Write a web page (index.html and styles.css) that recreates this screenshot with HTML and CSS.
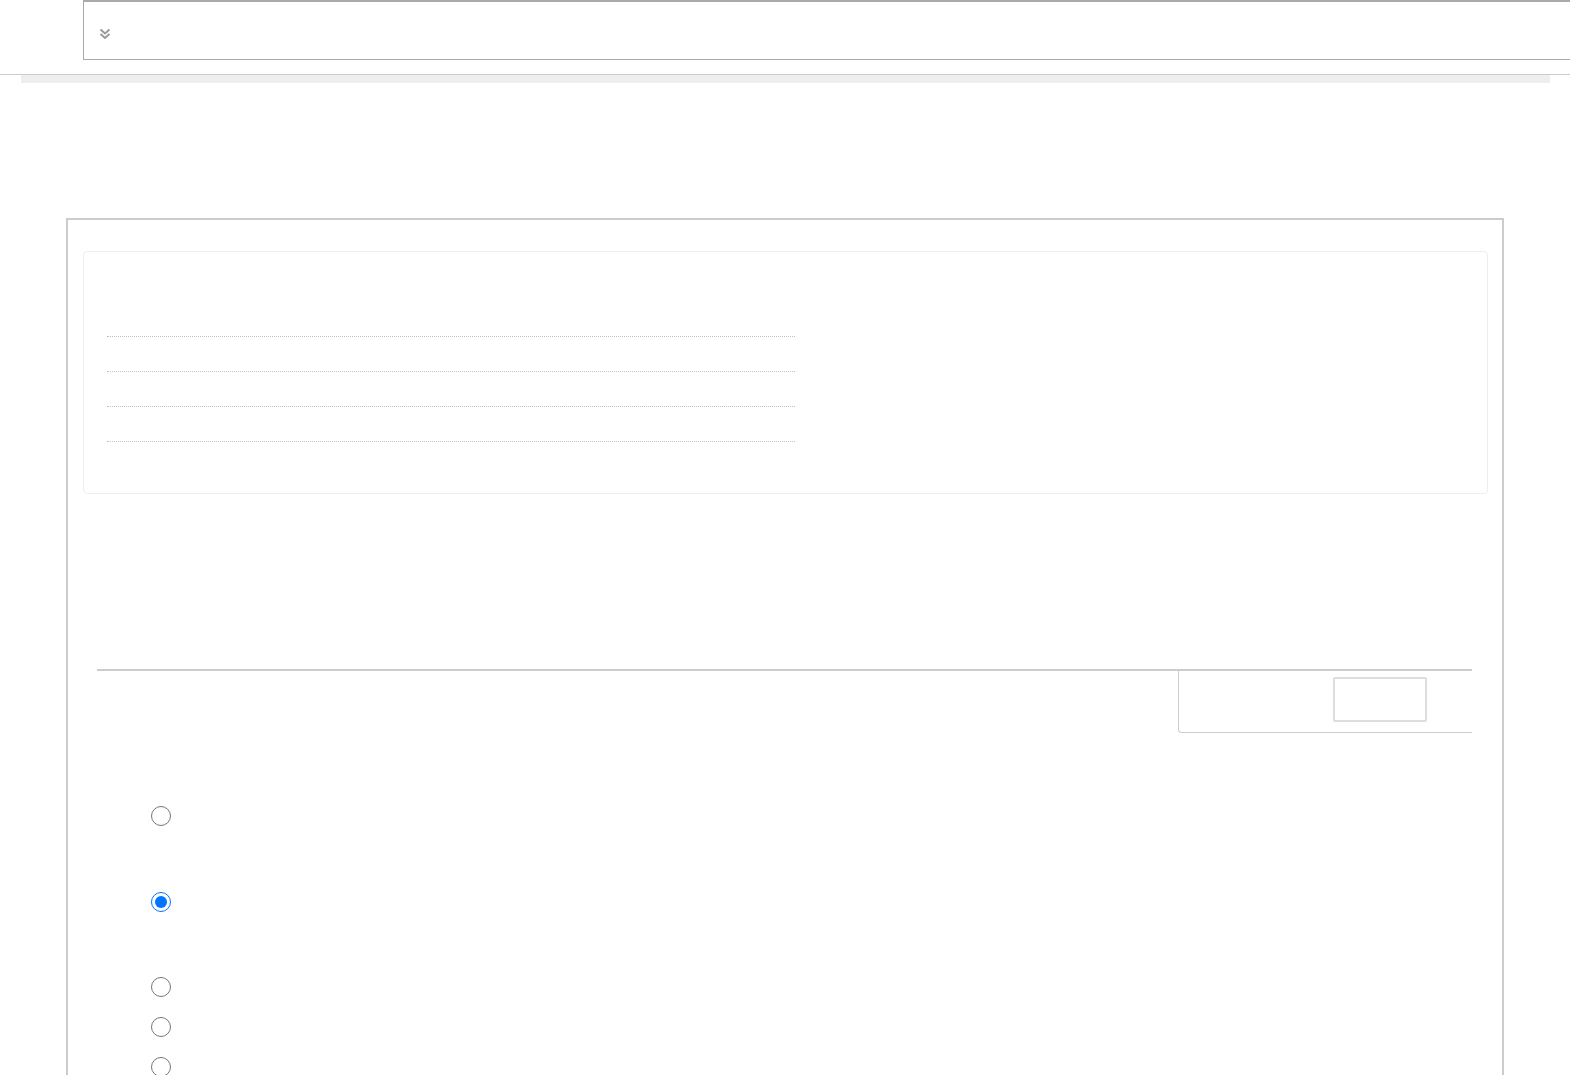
FILE: index.html
```html
<!DOCTYPE html>
<html>
<head>
<meta charset="utf-8">
<link rel="stylesheet" href="styles.css">
</head>
<body>
<div class="header">
  <div class="toolbar">
    <svg class="chev" width="12" height="12" viewBox="0 0 12 12"><path d="M1.5 1.5 L6 5.5 L10.5 1.5 M1.5 6 L6 10 L10.5 6" fill="none" stroke="#9a9a9a" stroke-width="2"/></svg>
  </div>
</div>
<div class="greybar"></div>
<div class="main">
  <div class="card">
    <div class="rows">
      <div class="row thick"><span class="c1"></span><span class="c2"></span></div>
      <div class="row"><span class="c1"></span><span class="c2"></span></div>
      <div class="row thick"><span class="c1"></span><span class="c2"></span></div>
      <div class="row"><span class="c1"></span><span class="c2"></span></div>
    </div>
  </div>
  <div class="section">
    <div class="tabbar">
      <div class="tabspace"></div>
      <div class="tabbox"><div class="field"></div></div>
    </div>
    <div class="radios">
      <label class="r r-big"><input type="radio" name="opt"></label>
      <label class="r r-big"><input type="radio" name="opt" checked></label>
      <label class="r r-mid"><input type="radio" name="opt"></label>
      <label class="r r-small"><input type="radio" name="opt"></label>
      <label class="r r-small"><input type="radio" name="opt"></label>
    </div>
  </div>
</div>
</body>
</html>
```
FILE: styles.css
```css
html, body {
  margin: 0;
  padding: 0;
  background: #fff;
  font-family: "Liberation Sans", Arial, sans-serif;
  overflow: hidden;
  height: 1075px;
}
.header {
  height: 74px;
  border-bottom: 1px solid #cccccc;
  box-sizing: content-box;
}
.toolbar {
  margin-left: 83px;
  width: 1500px;
  height: 57px;
  border: 1px solid #aaaaaa;
  border-top: 2px solid #aaaaaa;
  display: flex;
  align-items: center;
  padding-left: 15px;
  box-sizing: content-box;
}
.chev {
  display: block;
  margin-top: 6px;
}
.greybar {
  margin-left: 21px;
  width: 1529px;
  height: 8px;
  background: #eeeeee;
}
.main {
  margin-top: 135px;
  margin-left: 66px;
  width: 1434px;
  height: 900px;
  border: 2px solid #cccccc;
  border-bottom: none;
  padding-top: 31px;
}
.card {
  margin-left: 15px;
  width: 1403px;
  height: 241px;
  border: 1px solid #eeeeee;
  border-radius: 4px;
}
.rows {
  margin-left: 23px;
  margin-top: 51px;
  width: 688px;
}
.row {
  display: flex;
  height: 34px;
  border-bottom: 1px dotted #c4c4c4;
}
.row .c1 {
  width: 153px;
}
.row .c2 {
  flex: 1;
}
.row.thick {
  border-bottom: 1.5px dotted #c0c0c0;
}
.rows .row:nth-child(1) { height: 33px; }
.section {
  margin: 175px 30px 0 29px;
}
.tabbar {
  display: flex;
  border-top: 2px solid #cccccc;
}
.tabspace {
  flex: 1;
}
.tabbox {
  width: 294px;
  height: 62px;
  border-left: 1px solid #cccccc;
  border-bottom: 1px solid #cccccc;
  border-bottom-left-radius: 4px;
  display: flex;
  justify-content: flex-end;
  padding-top: 6px;
  padding-right: 45px;
  box-sizing: border-box;
}
.field {
  width: 94px;
  height: 45px;
  border: 2px solid #dddddd;
  border-radius: 2px;
  box-sizing: border-box;
}
.radios {
  display: flex;
  flex-direction: column;
  padding-left: 54px;
  padding-top: 73px;
}
.r {
  display: block;
  height: 20px;
}
.r input {
  width: 20px;
  height: 20px;
  margin: 0;
  display: block;
  accent-color: #0075ff;
}
.r-big { margin-bottom: 66px; }
.r-big + .r-big { margin-bottom: 65px; }
.r-mid { margin-bottom: 20px; }
.r-small { margin-bottom: 20px; }
```
